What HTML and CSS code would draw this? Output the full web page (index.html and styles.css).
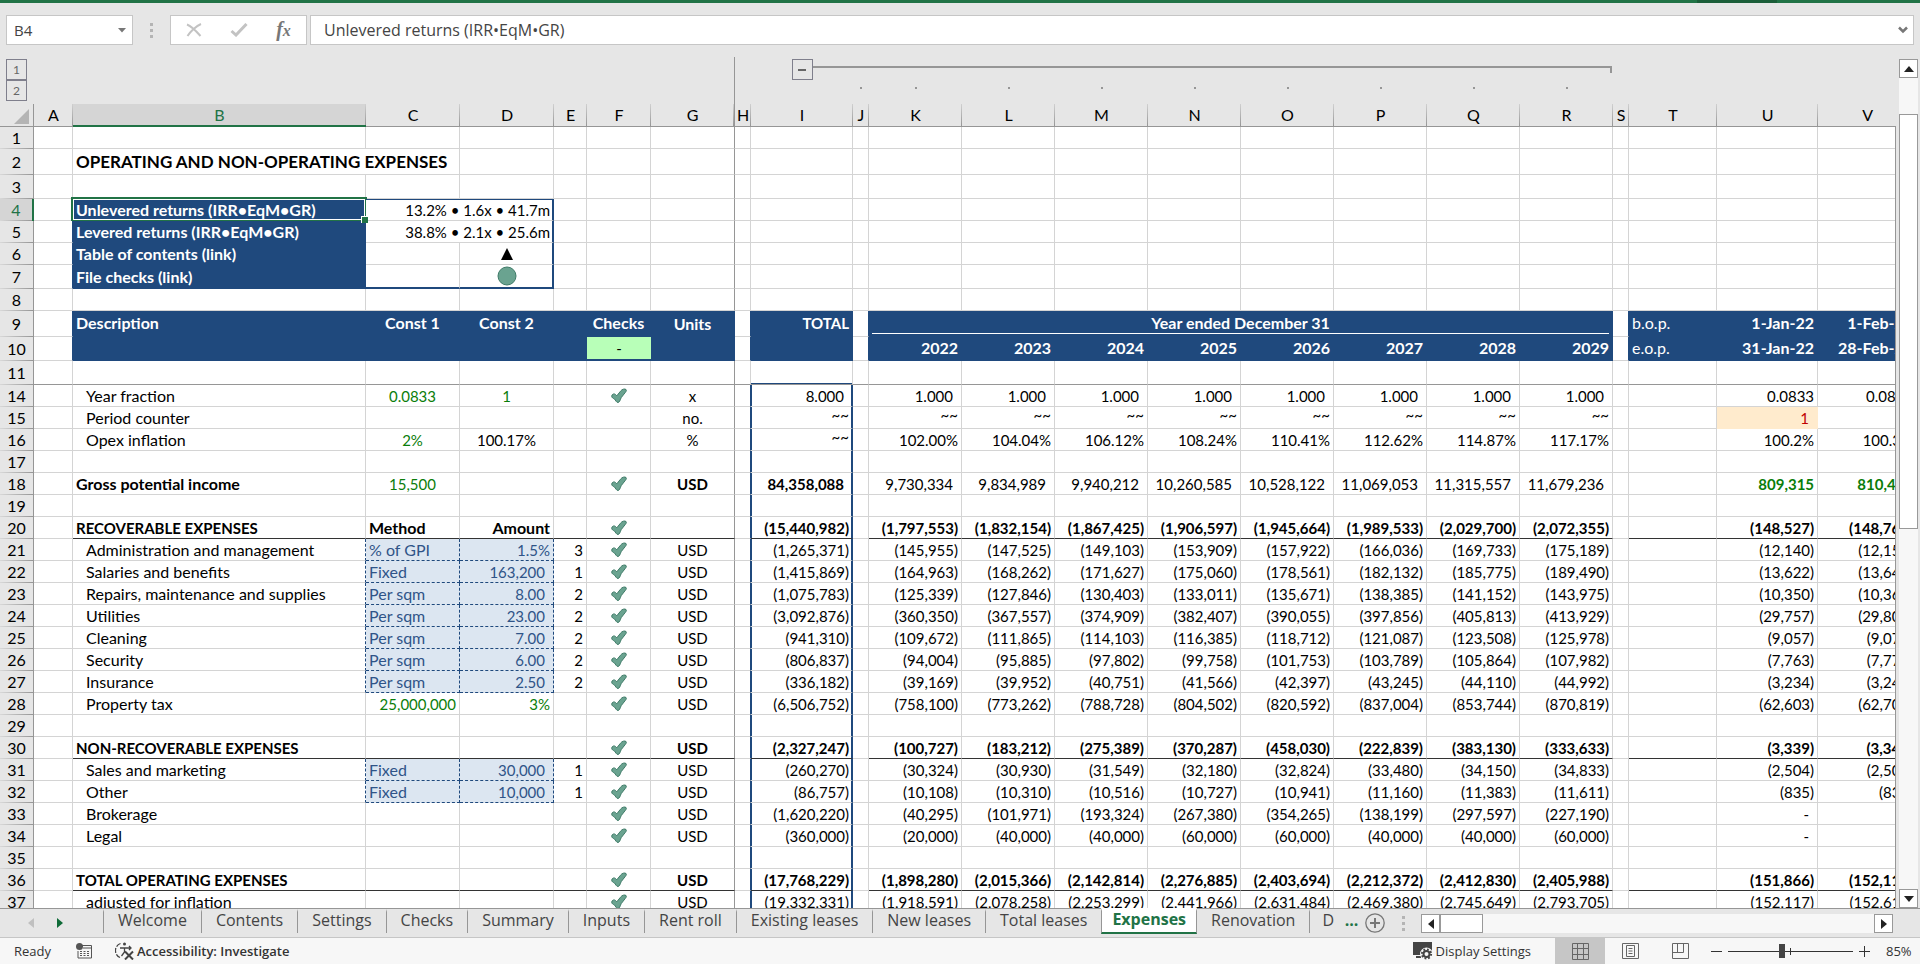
FILE: index.html
```html
<!DOCTYPE html>
<html lang="en">
<head>
<meta charset="utf-8">
<title>Expenses</title>
<link rel="stylesheet" href="styles.css">
</head>
<body>
<svg class="defs" aria-hidden="true">
  <symbol id="tick" viewBox="0 0 16 16">
    <path d="M.7 8.200C.8 6.200 3 5.200 4.400 6.400L5.800 7.800 9.500 3.200C11 1.200 13.600.4 15 1.500c.9 1-.1 2.200-1 3.300L10.300 9.500c-.7 1-.9 2.200-1.600 3.700-.8 1.600-2.700 1.600-3.500.2L3.300 10.800C2.300 10.600.7 9.600.7 8.200z" fill="#6aa390" stroke="#3f7b68" stroke-linejoin="round"/>
  </symbol>
</svg>
<div class="ribbon-edge"><span class="ribbon-shade"></span></div>

<header class="formula-bar">
  <div class="box name-box">
    <input class="name-input" aria-label="Name box" value="B4">
    <button class="drop" aria-label="Open name list"><svg width="8" height="5"><path d="M0 0h8L4 4.500z" fill="#777"/></svg></button>
  </div>
  <div class="grip"><i></i><i></i><i></i></div>
  <div class="box actions">
    <button aria-label="Cancel"><svg width="16" height="14" viewBox="0 0 16 14"><path d="M1 1.500C5 3 11 9 14.500 13M15 1C10 3 4 9 1.500 13" fill="none" stroke="#c3c3c3" stroke-width="2"/></svg></button>
    <button aria-label="Enter"><svg width="18" height="14" viewBox="0 0 18 14"><path d="M1.500 8l4.500 4L16.500 1" fill="none" stroke="#c3c3c3" stroke-width="3"/></svg></button>
    <button aria-label="Insert function" class="fx"><span class="fx-f">f</span><span class="fx-x">x</span></button>
  </div>
  <div class="box formula">
    <input class="formula-input" aria-label="Formula" value="Unlevered returns (IRR•EqM•GR)">
    <button class="drop" aria-label="Expand formula bar"><svg width="10" height="8"><path d="M1 1.500L5 5.500 9 1.500" fill="none" stroke="#777" stroke-width="2.500"/></svg></button>
  </div>
</header>

<main class="workspace">
  <div class="sheet">
    <table class="grid" id="grid">
      <colgroup id="cols"></colgroup>
      <thead id="head"></thead>
      <tbody id="body"></tbody>
    </table>
  </div>
  <div class="vscroll">
    <button class="arrow" aria-label="Scroll up"><svg width="10" height="6"><path d="M0 6h10L5 0z" fill="#222"/></svg></button>
    <span class="v-before"></span>
    <span class="v-thumb"></span>
    <span class="v-after"></span>
    <button class="arrow" aria-label="Scroll down"><svg width="10" height="6"><path d="M0 0h10L5 6z" fill="#222"/></svg></button>
  </div>
</main>

<nav class="tabbar">
  <div class="tabnav">
    <button aria-label="Previous sheets"><svg width="6" height="10"><path d="M6 0v10L0 5z" fill="#c0c0c0"/></svg></button>
    <button aria-label="Next sheets"><svg width="6" height="10"><path d="M0 0v10l6-5z" fill="#0f6b38"/></svg></button>
  </div>
  <div class="tabs">
    <button class="tab">Welcome</button>
    <button class="tab">Contents</button>
    <button class="tab">Settings</button>
    <button class="tab">Checks</button>
    <button class="tab">Summary</button>
    <button class="tab">Inputs</button>
    <button class="tab">Rent roll</button>
    <button class="tab">Existing leases</button>
    <button class="tab">New leases</button>
    <button class="tab">Total leases</button>
    <button class="tab active">Expenses</button>
    <button class="tab">Renovation</button>
    <button class="tab cut">D</button>
    <button class="more" aria-label="More sheets">...</button>
  </div>
  <button class="add" aria-label="New sheet"><svg width="20" height="20"><circle cx="10" cy="10" r="9.200" fill="none" stroke="#777" stroke-width="1.300"/><path d="M10 5v10M5 10h10" stroke="#777" stroke-width="2"/></svg></button>
  <div class="grip"><i></i><i></i><i></i></div>
  <div class="hscroll">
    <button class="arrow" aria-label="Scroll left"><svg width="6" height="10"><path d="M6 0v10L0 5z" fill="#222"/></svg></button>
    <span class="h-thumb"></span>
    <span class="h-track"></span>
    <button class="arrow" aria-label="Scroll right"><svg width="6" height="10"><path d="M0 0v10l6-5z" fill="#222"/></svg></button>
  </div>
</nav>

<footer class="status">
  <span class="ready">Ready</span>
  <button class="macro" aria-label="Record macro"><svg width="16" height="16" viewBox="0 0 16 16"><path d="M6 2.500h9.500v12.500h-13.500V8" fill="none" stroke="#555"/><path d="M7 5h8M4 8.500h2M7.500 8.500h2M11 8.500h2M4 10.500h2M7.500 10.500h2M11 10.500h2M4 12.500h2M7.500 12.500h2M11 12.500h2" stroke="#555"/><circle cx="3.500" cy="3.500" r="3.500" fill="#555"/></svg></button>
  <button class="access"><svg width="20" height="18" viewBox="0 0 20 18"><path d="M5.500 1.500A7.500 7.500 0 0 0 5 15.500" fill="none" stroke="#444" stroke-width="1.300" stroke-dasharray="5 1.500"/><circle cx="9.500" cy="2" r="1.500" fill="#444"/><path d="M5 6h4.500v4L6.500 14M9.500 6H15M14 4l2 2-2 2" fill="none" stroke="#444" stroke-width="1.300"/><path d="M10 9.500l8 8M18 9.500l-8 8" stroke="#444" stroke-width="2"/></svg><span>Accessibility: Investigate</span></button>
  <span class="fill"></span>
  <button class="display"><svg width="20" height="18" viewBox="0 0 20 18"><path d="M0 0h19v13H0z" fill="#444"/><path d="M3 15h5" stroke="#444" stroke-width="2"/><circle cx="13.500" cy="12" r="4" fill="none" stroke="#f7f7f7" stroke-width="5"/><circle cx="13.500" cy="12" r="2" fill="#f7f7f7"/><circle cx="13.500" cy="12" r="3" fill="none" stroke="#444" stroke-width="2"/><circle cx="13.500" cy="12" r="4.600" fill="none" stroke="#444" stroke-width="2" stroke-dasharray="1.800 1.800"/></svg><span>Display Settings</span></button>
  <div class="views">
    <button class="view on" aria-label="Normal"><svg width="17" height="17"><path d="M.5.5h16v16H.5zM.5 5.500h16M.5 11.500h16M5.500.5v16M11.500.5v16" fill="none" stroke="#666"/></svg></button>
    <button class="view" aria-label="Page layout"><svg width="17" height="16"><path d="M.5.500h16v15H.500zM4.500 2.500h8v11h-8zM6.500 5.500h4M6.500 8h4M6.500 10.500h4" fill="none" stroke="#666"/></svg></button>
    <button class="view" aria-label="Page break preview"><svg width="17" height="16"><path d="M.5.500h16v15H.500zM5.500.5v9M11.500.5v9M.5 9.500h11" fill="none" stroke="#666"/></svg></button>
  </div>
  <div class="zoom">
    <button aria-label="Zoom out"><svg width="11" height="11"><path d="M0 5.500h11" stroke="#333"/></svg></button>
    <span class="slider"><input type="range" min="0" max="200" value="85" aria-label="Zoom"></span>
    <button aria-label="Zoom in"><svg width="11" height="11"><path d="M0 5.500h11M5.500 0v11" stroke="#333"/></svg></button>
    <span class="percent">85%</span>
  </div>
</footer>
<script src="sheet.js"></script>
</body>
</html>
```
FILE: styles.css
```css
* { box-sizing: border-box; }
body {
  margin: 0;
  height: 100vh;
  padding-bottom: 2px;
  display: flex;
  flex-direction: column;
  overflow: hidden;
  background: #fff;
  color: #000;
  font-family: Lato, "Open Sans", sans-serif;
  font-size: 15px;
}
button, input { font: inherit; color: inherit; border: 0; padding: 0; margin: 0; background: none; outline: 0; }
svg { display: block; }
.defs { display: none; }

.ribbon-edge { height: 3px; background: #217346; display: flex; justify-content: flex-end; flex: none; }
.ribbon-shade { width: 80px; margin-right: 143px; background: #1b5e39; }

/* formula bar */
.formula-bar {
  flex: none;
  display: flex;
  align-items: center;
  padding: 12px 6px;
  background: #e6e6e6;
  font: 16px "Open Sans", sans-serif;
  color: #444;
}
.box { height: 30px; background: #fff; border: 1px solid #c6c6c6; display: flex; align-items: center; }
.name-box { width: 127px; padding: 0 6px; }
.name-input { flex: 1; min-width: 0; font-size: 15px; padding-left: 1px; }
.grip { width: 37px; display: flex; flex-direction: column; align-items: center; gap: 3px; }
.grip i { width: 3px; height: 3px; background: #b4b4b4; }
.actions { width: 137px; justify-content: space-around; }
.actions button { width: 30px; display: flex; justify-content: center; align-items: center; }
.actions .fx { font-family: "Liberation Serif", serif; font-style: italic; font-weight: 700; color: #777; line-height: 20px; align-items: baseline; }
.fx-f { font-size: 20px; }
.fx-x { font-size: 16px; }
.formula { flex: 1; margin-left: 3px; padding: 0 5px 0 13px; }
.formula-input { flex: 1; min-width: 0; }

/* workspace */
.workspace { flex: 1; min-height: 0; display: flex; background: #e6e6e6; padding-right: 2px; }
.sheet { flex: 1; min-width: 0; overflow: hidden; position: relative; }
.sheet::after { content: ""; position: absolute; top: 70px; right: 0; bottom: 0; border-right: 1px solid #969696; }
.grid { table-layout: fixed; width: 0; border-collapse: separate; border-spacing: 0; }
.grid tr { height: 22px; }
.grid th, .grid td { padding: 0; line-height: 18px; white-space: nowrap; overflow: hidden; font-weight: 400; }
.grid td { background: #fff; border-right: 1px solid #d4d4d4; border-bottom: 1px solid #d4d4d4; padding: 0 3px; text-align: right; position: relative; }

/* outline levels above the column letters */
.grid .outline-row { height: 23px; }
.grid .outline-row.second { height: 24px; }
.outline-row th { vertical-align: top; }
.outline-row .level { padding: 2px 0 0 6px; }
.second .level { padding: 0 0 0 6px; }
.outline-row button { display: flex; align-items: center; justify-content: center; width: 21px; height: 21px; border: 1px solid #7f7f8c; font-size: 12px; color: #666; flex: none; }
.toggle { display: flex; padding-top: 2px; }
.toggle::before { content: ""; flex: 1; }
.toggle::after { content: ""; flex: 1; margin-top: 7px; height: 2px; background: #969696; }
.bracket::before { content: ""; display: block; margin: 9px 1px 0 0; height: 5px; border-top: 2px solid #969696; border-right: 2px solid #969696; }
.dot::before { content: ""; display: block; width: 2px; height: 2px; margin: 7px auto 0; background: #969696; }

.grid .letters { height: 23px; }
.grid .letters th { font-size: 16px; }
.letters th {
  border-bottom: 1px solid #969696;
  background: linear-gradient(#d0d0d0, #969696) right / 1px 100% no-repeat #e6e6e6;
}
.letters .sel { background-color: #d5d5d5; color: #217346; border-bottom: 2px solid #217346; }
.letters .last { background: #e6e6e6; }
.letters .corner { background: #e6e6e6; border-right: 1px solid #969696; }
.corner svg { margin: 3px 4px 0 auto; }
.grid .rownum {
  border-right: 1px solid #969696;
  background: linear-gradient(90deg, #d8d8d8, #969696) bottom / 100% 1px no-repeat #e6e6e6;
  font-size: 16px;
}
.grid .rownum.sel { background-color: #d5d5d5; color: #217346; border-right: 2px solid #217346; }

/* cells */
.grid .freeze { border-right: 1px solid #969696; }
.grid .text { font-size: 16px; }
.grid .left { text-align: left; }
.grid .indent { text-align: left; padding-left: 13px; }
.grid .mid { text-align: center; }
.grid .pos { padding-right: 8px; }
.grid .bold { font-weight: 700; }
.grid .title { font-size: 17px; text-align: left; font-weight: 700; }
.grid .green { color: #0a7d0a; }
.grid .navy { background: #1f497d; border-color: #1f497d; color: #fff; }
.grid .raised { padding-bottom: 2px; }
.grid .tilde { vertical-align: top; line-height: 16px; }
.grid .edge { border-right-color: #1f497d; }
.grid .rule td.r { border-bottom-color: #333; }
.grid .pane-end td { border-bottom-color: #969696; }
.grid .total { border-right: 2px solid #1f497d; box-shadow: inset 1px 0 #1f497d; padding-right: 2px; }
.grid .total.pos { padding-right: 7px; }
.grid .total-top { box-shadow: inset 0 -1px #1f497d; }
.grid .entry { background: #dce6f1; color: #2f5488; border-right: 1px dashed #1f497d; border-bottom: 1px dashed #1f497d; }
.grid .entry-edge { border-right: 1px dashed #1f497d; }
.grid .okay { background: #b8ffb8; border-bottom: 2px solid #1f497d; border-right: 0; color: #000; }
.grid .counter { background: #ffebcd; border-color: #ffebcd; color: #c00000; }
.grid .box-right { border-right: 2px solid #1f497d; padding-right: 2px; }
.grid .box-top { box-shadow: inset 0 1px #1f497d; }
.grid .box-bottom { border-bottom: 2px solid #1f497d; }
.grid .years { padding: 0 3px; text-align: center; font-weight: 700; }
.years span { display: block; border-bottom: 1px solid #fff; line-height: 20px; }
.grid td svg { margin: auto; }
.grid .check { padding: 0; }
.grid .cursor { overflow: visible; }
.cursor::before { content: ""; position: absolute; inset: -2px; border: 2px solid #217346; outline: 1px solid #fff; outline-offset: -3px; }
.cursor::after { content: ""; position: absolute; right: -3px; bottom: -3px; width: 6px; height: 6px; background: #217346; border: solid #fff; border-width: 1px 0 0 1px; z-index: 1; }

.vscroll { flex: none; width: 19px; margin-left: 3px; padding-top: 2px; display: flex; flex-direction: column; }
.arrow { flex: none; width: 19px; height: 19px; border: 1px solid #999; background: #fff; display: flex; align-items: center; justify-content: center; }
.v-before { flex: 36; background: #f7f7f7; }
.v-thumb { flex: 414; background: #fff; border: 1px solid #999; }
.v-after { flex: 361; background: #f7f7f7; }

/* sheet tabs */
.tabbar { flex: none; height: 30px; background: #e6e6e6; border-top: 1px solid #969696; border-bottom: 1px solid #c6c6c6; display: flex; align-items: flex-start; }
.tabnav { width: 103px; height: 28px; padding-left: 28px; display: flex; gap: 23px; align-items: center; }
.tabs { flex: none; width: 1262px; display: flex; font: 16px "Open Sans", sans-serif; color: #444; }
.tab { flex: none; height: 24px; padding: 0 14px 6px; border-left: 1px solid #969696; border-top: 3px solid #e6e6e6; line-height: 16px; }
.tab.active { background: #fff; border-top-color: #fff; border-right: 1px solid #969696; border-bottom: 2px solid #217346; margin-top: -1px; height: 26px; padding: 0 10px 5px; color: #217346; font-weight: 700; }
.tab.active + .tab { border-left: 0; }
.tab.cut { padding: 0 4px 6px 12px; }
.more { flex: 1; color: #217346; font-weight: 700; height: 22px; line-height: 16px; }
.add { margin-top: 4px; }
.tabbar .grip { width: 36px; margin: 7px 0 0; }
.hscroll { flex: 1; margin: 5px 27px 0 0; height: 19px; display: flex; background: #f7f7f7; }
.h-thumb { width: 43px; background: #fff; border: 1px solid #999; }
.h-track { flex: 1; }

/* status bar */
.status { flex: none; height: 26px; background: #f7f7f7; display: flex; align-items: center; font: 13px "Open Sans", sans-serif; color: #333; }
.ready { padding: 0 25px 0 14px; }
.access, .display { display: flex; align-items: center; gap: 2px; }
.access { margin-left: 23px; font-weight: 600; }
.fill { flex: 1; }
.display { margin-right: 24px; gap: 3px; }
.views { display: flex; height: 100%; }
.view { width: 50px; display: flex; align-items: center; justify-content: center; }
.view.on { background: #c6c6c6; }
.zoom { display: flex; align-items: center; gap: 6px; width: 215px; padding-left: 6px; }
.slider { position: relative; width: 125px; height: 14px; display: flex; align-items: center; }
.slider::after { content: ""; position: absolute; left: 62px; top: 4px; width: 1px; height: 7px; background: #333; }
.slider input { appearance: none; width: 125px; height: 14px; background: linear-gradient(#333, #333) center / 100% 1px no-repeat; }
.slider input::-webkit-slider-thumb { appearance: none; width: 6px; height: 14px; background: #444; }
.percent { margin-left: 10px; }
```
FILE: sheet.js
```js
const letters = "ABCDEFGHIJKLMNOPQRSTUV".split("");
const widths = [34, 39, 293, 94, 94, 33, 64, 84, 16, 102, 16, 93, 93, 93, 93, 93, 93, 93, 93, 16, 88, 101, 99];
const heights = { 2: 26, 3: 24, 7: 24, 9: 26, 10: 24, 11: 24 };
const tick = '<svg width="16" height="16"><use href="#tick"/></svg>';

// Columns: label | const 1 | const 2 | E | tick | units | total, K..R, U, V
const rows = {
  14: "Year fraction|0.0833|1||y|x|8.000 1.000 1.000 1.000 1.000 1.000 1.000 1.000 1.000 0.0833 0.0833",
  15: "Period counter|||||no.|~~ ~~ ~~ ~~ ~~ ~~ ~~ ~~ ~~ 1 .",
  16: "Opex inflation|2%|100.17%|||%|~~ 102.00% 104.04% 106.12% 108.24% 110.41% 112.62% 114.87% 117.17% 100.2% 100.3%",
  18: "Gross potential income|15,500|||y|USD|84,358,088 9,730,334 9,834,989 9,940,212 10,260,585 10,528,122 11,069,053 11,315,557 11,679,236 809,315 810,474",
  20: "RECOVERABLE EXPENSES|Method|Amount||y||(15,440,982) (1,797,553) (1,832,154) (1,867,425) (1,906,597) (1,945,664) (1,989,533) (2,029,700) (2,072,355) (148,527) (148,766)",
  21: "Administration and management|% of GPI|1.5%|3|y|USD|(1,265,371) (145,955) (147,525) (149,103) (153,909) (157,922) (166,036) (169,733) (175,189) (12,140) (12,157)",
  22: "Salaries and benefits|Fixed|163,200|1|y|USD|(1,415,869) (164,963) (168,262) (171,627) (175,060) (178,561) (182,132) (185,775) (189,490) (13,622) (13,641)",
  23: "Repairs, maintenance and supplies|Per sqm|8.00|2|y|USD|(1,075,783) (125,339) (127,846) (130,403) (133,011) (135,671) (138,385) (141,152) (143,975) (10,350) (10,366)",
  24: "Utilities|Per sqm|23.00|2|y|USD|(3,092,876) (360,350) (367,557) (374,909) (382,407) (390,055) (397,856) (405,813) (413,929) (29,757) (29,803)",
  25: "Cleaning|Per sqm|7.00|2|y|USD|(941,310) (109,672) (111,865) (114,103) (116,385) (118,712) (121,087) (123,508) (125,978) (9,057) (9,071)",
  26: "Security|Per sqm|6.00|2|y|USD|(806,837) (94,004) (95,885) (97,802) (99,758) (101,753) (103,789) (105,864) (107,982) (7,763) (7,775)",
  27: "Insurance|Per sqm|2.50|2|y|USD|(336,182) (39,169) (39,952) (40,751) (41,566) (42,397) (43,245) (44,110) (44,992) (3,234) (3,240)",
  28: "Property tax|25,000,000|3%||y|USD|(6,506,752) (758,100) (773,262) (788,728) (804,502) (820,592) (837,004) (853,744) (870,819) (62,603) (62,703)",
  30: "NON-RECOVERABLE EXPENSES||||y|USD|(2,327,247) (100,727) (183,212) (275,389) (370,287) (458,030) (222,839) (383,130) (333,633) (3,339) (3,344)",
  31: "Sales and marketing|Fixed|30,000|1|y|USD|(260,270) (30,324) (30,930) (31,549) (32,180) (32,824) (33,480) (34,150) (34,833) (2,504) (2,508)",
  32: "Other|Fixed|10,000|1|y|USD|(86,757) (10,108) (10,310) (10,516) (10,727) (10,941) (11,160) (11,383) (11,611) (835) (836)",
  33: "Brokerage||||y|USD|(1,620,220) (40,295) (101,971) (193,324) (267,380) (354,265) (138,199) (297,597) (227,190) - -",
  34: "Legal||||y|USD|(360,000) (20,000) (40,000) (40,000) (60,000) (60,000) (40,000) (40,000) (60,000) - -",
  36: "TOTAL OPERATING EXPENSES||||y|USD|(17,768,229) (1,898,280) (2,015,366) (2,142,814) (2,276,885) (2,403,694) (2,212,372) (2,412,830) (2,405,988) (151,866) (152,110)",
  37: "adjusted for inflation||||y|USD|(19,332,331) (1,918,591) (2,078,258) (2,253,299) (2,441,966) (2,631,484) (2,469,380) (2,745,649) (2,793,705) (152,117) (152,614)"
};
const boldRows = [20, 30, 36];

const td = (text, cls = "", span = 1) =>
  `<td class="${cls}"${span > 1 ? ` colspan="${span}"` : ""}>${text}</td>`;

function headRows() {
  const dots = letters.map((c, i) => `<th class="${i >= 9 && i <= 17 ? "dot" : ""}${c === "G" ? " freeze" : ""}"></th>`);
  return `<tr class="outline-row"><th class="level"><button>1</button></th>` +
    `<th colspan="6"></th><th class="freeze"></th><th></th>` +
    `<th><div class="toggle"><button aria-label="Collapse group"><svg width="8" height="2"><path d="M0 1h8" stroke="#666" stroke-width="2"/></svg></button></div></th>` +
    `<th colspan="9" class="bracket"></th><th colspan="4"></th></tr>` +
    `<tr class="outline-row second"><th class="level"><button>2</button></th>${dots.join("")}</tr>` +
    `<tr class="letters"><th class="corner"><svg width="15" height="15"><path d="M15 0v15H0z" fill="#b4b4b4"/></svg></th>` +
    letters.map(c => `<th scope="col" class="${c === "B" ? "sel" : c === "G" ? "freeze" : c === "V" ? "last" : ""}">${c}</th>`).join("") + "</tr>";
}

function blankCells(n) {
  return letters.map(c => {
    let cls = c === "G" ? "freeze" : "";
    if (n > 14 && c === "H") cls += " edge";
    if (n > 14 && c === "I") cls += " total";
    if (n === 11 && c === "I") cls += " total-top";
    return td("", cls);
  });
}

function headerCells(n) {
  const c = blankCells(n);
  if (n === 2) c.splice(1, 2, td("OPERATING AND NON-OPERATING EXPENSES", "title", 2));
  if (n >= 4 && n <= 7) {
    const label = ["Unlevered returns (IRR•EqM•GR)", "Levered returns (IRR•EqM•GR)", "Table of contents (link)", "File checks (link)"][n - 4];
    c[0] = td("", "edge");
    c[1] = td(label, "navy bold left text" + (n === 4 ? " cursor" : ""));
    if (n === 6) c[3] = td('<svg width="12" height="12"><path d="M6 0l6 12H0z"/></svg>', "box-right");
    if (n === 7) {
      c[2] = td("", "box-bottom");
      c[3] = td('<svg width="20" height="20"><circle cx="10" cy="10" r="9" fill="#6aa390" stroke="#3f7b68"/></svg>', "box-right box-bottom");
    }
    if (n === 4) c.splice(2, 2, td("13.2% • 1.6x • 41.7m", "box-right box-top", 2));
    if (n === 5) c.splice(2, 2, td("38.8% • 2.1x • 25.6m", "box-right", 2));
  }
  if (n === 9 || n === 10) {
    const first = n === 9;
    const navy = "navy bold text raised";
    c[0] = td("", "edge");
    c[1] = td(first ? "Description" : "", navy + " left");
    c[2] = td(first ? "Const 1" : "", navy + " mid");
    c[3] = td(first ? "Const 2" : "", navy + " mid");
    c[4] = td("", "navy");
    c[5] = first ? td("Checks", navy + " mid") : td("-", "okay mid");
    c[6] = td(first ? "Units" : "", "navy bold text mid freeze");
    c[7] = td("", "edge");
    c[8] = td(first ? "TOTAL" : "", "navy bold raised");
    c[9] = td("", "edge");
    c[18] = td("", "edge");
    c[19] = td(first ? "b.o.p." : "e.o.p.", "navy left text raised");
    c[20] = td(first ? "1-Jan-22" : "31-Jan-22", navy);
    c[21] = td(first ? "1-Feb-22" : "28-Feb-22", navy);
    if (first) c.splice(10, 8, td("<span>Year ended December 31</span>", "navy years text", 8));
    else for (let i = 0; i < 8; i++) c[10 + i] = td(2022 + i, navy);
  }
  return c;
}

function dataCells(n) {
  const [label, c1, c2, e, check, unit, list] = rows[n].split("|");
  const nums = list.split(" ");
  const strong = boldRows.includes(n);
  const bold = strong ? " bold r" : "";
  const entry = (n >= 21 && n <= 27) || n === 31 || n === 32;
  const num = (v, extra) => {
    if (v === ".") v = "";
    const tilde = v === "~~" ? " tilde" : "";
    const pos = /^(-|[\d.,]+)$/.test(v) ? " pos" : "";
    return td(v, extra + tilde + pos);
  };
  let cls1 = "mid green", cls2 = n === 14 ? "mid green" : "mid";
  if (strong) { cls1 = "left text"; cls2 = "text"; }
  if (n === 28) { cls1 = "green"; cls2 = "green"; }
  if (entry) { cls1 = "entry left text"; cls2 = "entry" + (n === 21 ? "" : " pos"); }
  const labelCls = strong ? "left" : n === 18 ? "bold left text" : "indent text";
  const monthly = v => n === 15 || v === "-" ? num(v, v === "1" ? "counter" : "") : td(v, (n === 18 ? "bold green" : "") + bold);
  return [
    td(""),
    td(label, labelCls + bold + (entry ? " entry-edge" : "")),
    td(c1, cls1 + bold), td(c2, cls2 + bold), td(e, bold),
    td(check ? tick : "", "check" + bold),
    td(unit, "mid freeze" + (n === 18 ? " bold" : "") + bold),
    td("", "edge"),
    num(nums[0], "total" + (n === 18 ? " bold" : "") + bold),
    td(""),
    ...nums.slice(1, 9).map(v => num(v, bold)),
    td(""), td("", bold), monthly(nums[9]), monthly(nums[10])
  ];
}

document.getElementById("cols").innerHTML = widths.map(w => `<col style="width:${w}px">`).join("");
document.getElementById("head").innerHTML = headRows();
let html = "";
for (let n = 1; n <= 37; n++) {
  if (n === 12 || n === 13) continue;
  const cells = rows[n] ? dataCells(n) : n < 14 ? headerCells(n) : blankCells(n);
  const cls = boldRows.includes(n) ? "rule" : n === 11 ? "pane-end" : "";
  html += `<tr class="${cls}" style="height:${heights[n] || 22}px"><th scope="row" class="rownum${n === 4 ? " sel" : ""}">${n}</th>${cells.join("")}</tr>`;
}
document.getElementById("body").innerHTML = html;
```
